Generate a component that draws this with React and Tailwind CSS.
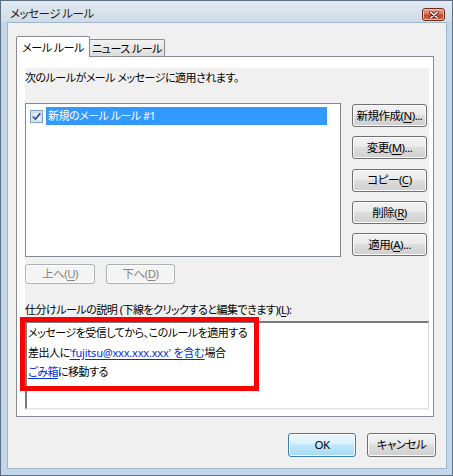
import React from "react";

const font = "font-['Noto_Sans','Noto_Sans_CJK_JP',sans-serif] [font-feature-settings:'palt'] tracking-[-0.5px]";

function Btn({ children, className = "", disabled = false, primary = false }) {
  let look = "border-[#707070] bg-[linear-gradient(#f2f2f2_0%,#ebebeb_45%,#dddddd_50%,#cfcfcf_100%)] text-black";
  if (disabled) look = "border-[#adb2b5] bg-[#f4f4f4] text-[#838383]";
  if (primary) look = "border-[#3c7fb1] bg-[linear-gradient(#eaf6fd_0%,#d9f0fc_45%,#bee6fd_50%,#a7d9f5_100%)] text-black";
  return (
    <div
      className={`flex items-center justify-center whitespace-nowrap rounded-[3px] border shadow-[inset_0_0_0_1px_#fbfbfb] text-[11.5px] leading-none select-none ${look} ${className}`}
    >
      {children}
    </div>
  );
}

function CheckBox() {
  return (
    <svg width="13" height="13" viewBox="0 0 13 13" className="shrink-0">
      <defs>
        <linearGradient id="cbg" x1="0" y1="0" x2="1" y2="1">
          <stop offset="0" stopColor="#dbe6f3" />
          <stop offset="1" stopColor="#ffffff" />
        </linearGradient>
      </defs>
      <rect x="0.5" y="0.5" width="12" height="12" fill="#f4f4f4" stroke="#7d9fc9" />
      <rect x="2" y="2" width="9" height="9" fill="url(#cbg)" stroke="#b4c8e0" strokeWidth="0.8" />
      <path d="M3 6.5 L5.4 9.2 L10.2 3.4" fill="none" stroke="#2a4aa0" strokeWidth="1.7" />
    </svg>
  );
}

function CloseButton() {
  return (
    <div className="w-[23px] h-[13px] rounded-[3px] border border-[#6e2a1e] bg-[linear-gradient(#eaa898_0%,#d9735d_45%,#c7452c_55%,#d7684c_100%)] flex items-center justify-center shadow-[inset_0_0_0_1px_#f0b9aa]">
      <svg width="10" height="8" viewBox="0 0 10 8">
        <path d="M1.5 1 L8.5 7 M8.5 1 L1.5 7" stroke="#5a1a10" strokeWidth="3" strokeLinecap="round" />
        <path d="M1.5 1 L8.5 7 M8.5 1 L1.5 7" stroke="#ffffff" strokeWidth="1.6" strokeLinecap="round" />
      </svg>
    </div>
  );
}

const sideButtons = [
  ["新規作成(", "N", ")..."],
  ["変更(", "M", ")..."],
  ["コピー(", "C", ")"],
  ["削除(", "R", ")"],
  ["適用(", "A", ")..."],
];

export default function App() {
  return (
    <div className={`w-[453px] h-[476px] border border-[#5d6f82] bg-[#c3d6ea] flex flex-col text-[11px] text-black ${font}`}>
      {/* title bar */}
      <div className="h-[21px] flex items-start justify-between bg-[linear-gradient(#e3eaf2,#cfdbe8)] pl-[9px] pr-[7px]">
        <span className="pt-[5px] leading-[16px] text-[11.5px] text-[#1e1e1e]">メッセージ ルール</span>
        <div className="pt-[7px]">
          <CloseButton />
        </div>
      </div>

      {/* client area */}
      <div className="flex-1 ml-[6px] mr-[5px] mb-[6px] border border-[#9fb6cd] bg-[#f0f0f0] flex flex-col">
        {/* tabs */}
        <div className="flex items-end ml-[8px] mt-[13px] whitespace-nowrap">
          <div className="relative z-10 -mb-px h-[21px] w-[74px] bg-white border border-b-0 border-[#898c95] rounded-t-[2px] flex items-center justify-center leading-none">
            メール ルール
          </div>
          <div className="h-[17px] w-[76px] -ml-px border border-b-0 border-[#898c95] rounded-t-[2px] bg-[linear-gradient(#f3f3f3,#dcdcdc)] flex items-center justify-center leading-none">
            ニュース ルール
          </div>
        </div>

        {/* tab panel */}
        <div className="ml-[8px] w-[418px] h-[361px] border border-[#898c95] bg-white pl-[8px] pt-[11px]">
          <div className="w-[404px] h-[342px] bg-[#f0f0f0] flex flex-col">
            <div className="mt-[2px] leading-[16px]">次のルールがメール メッセージに適用されます。</div>

            <div className="mt-[17px] flex">
              <div className="w-[316px] h-[154px] border border-[#828790] bg-white pt-[3px] pl-[4px]">
                <div className="flex items-center gap-[3px]">
                  <CheckBox />
                  <div className="w-[281px] h-[18px] bg-[#3399ff] text-white leading-[18px] pl-[2px]">
                    新規のメール ルール #1
                  </div>
                </div>
              </div>
              <div className="ml-[11px] mt-[1px] flex flex-col gap-[9.25px]">
                {sideButtons.map(([a, k, b]) => (
                  <Btn key={k} className="w-[75px] h-[23px]">
                    {a}
                    <span className="underline underline-offset-2">{k}</span>
                    {b}
                  </Btn>
                ))}
              </div>
            </div>

            <div className="mt-[7px] flex gap-[11px]">
              <Btn disabled className="w-[70px] h-[20px]">
                上へ(<span className="underline underline-offset-2">U</span>)
              </Btn>
              <Btn disabled className="w-[69px] h-[20px]">
                下へ(<span className="underline underline-offset-2">D</span>)
              </Btn>
            </div>

            <div className="mt-[18px] leading-[16px]">
              仕分けルールの説明 (下線をクリックすると編集できます)(<span className="underline underline-offset-2">L</span>):
            </div>

            <div className="relative mt-[3px]">
              <div className="w-[404px] h-[88px] border-t-2 border-l-2 border-[#7a7a7a] border-r border-b border-r-[#d8d8d8] border-b-[#e4e4e4] bg-white pl-[1px] leading-[19.5px]">
                <div>メッセージを受信してから、このルールを適用する</div>
                <div>
                  差出人に
                  <span className="text-[#0030e0] underline underline-offset-2 tracking-[-0.2px]">'fujitsu@xxx.xxx.xxx' を含む</span>
                  場合
                </div>
                <div>
                  <span className="text-[#0030e0] underline underline-offset-2">ごみ箱</span>
                  に移動する
                </div>
              </div>
              <div className="absolute left-[-5px] top-[-4px] w-[239px] h-[74px] border-[5px] border-[#ff0000] pointer-events-none" />
            </div>
          </div>
        </div>

        {/* dialog buttons */}
        <div className="mt-[16px] flex justify-end gap-[11px] pr-[10px]">
          <Btn primary className="w-[68px] h-[24px]">OK</Btn>
          <Btn className="w-[69px] h-[24px]">キャンセル</Btn>
        </div>
      </div>
    </div>
  );
}
